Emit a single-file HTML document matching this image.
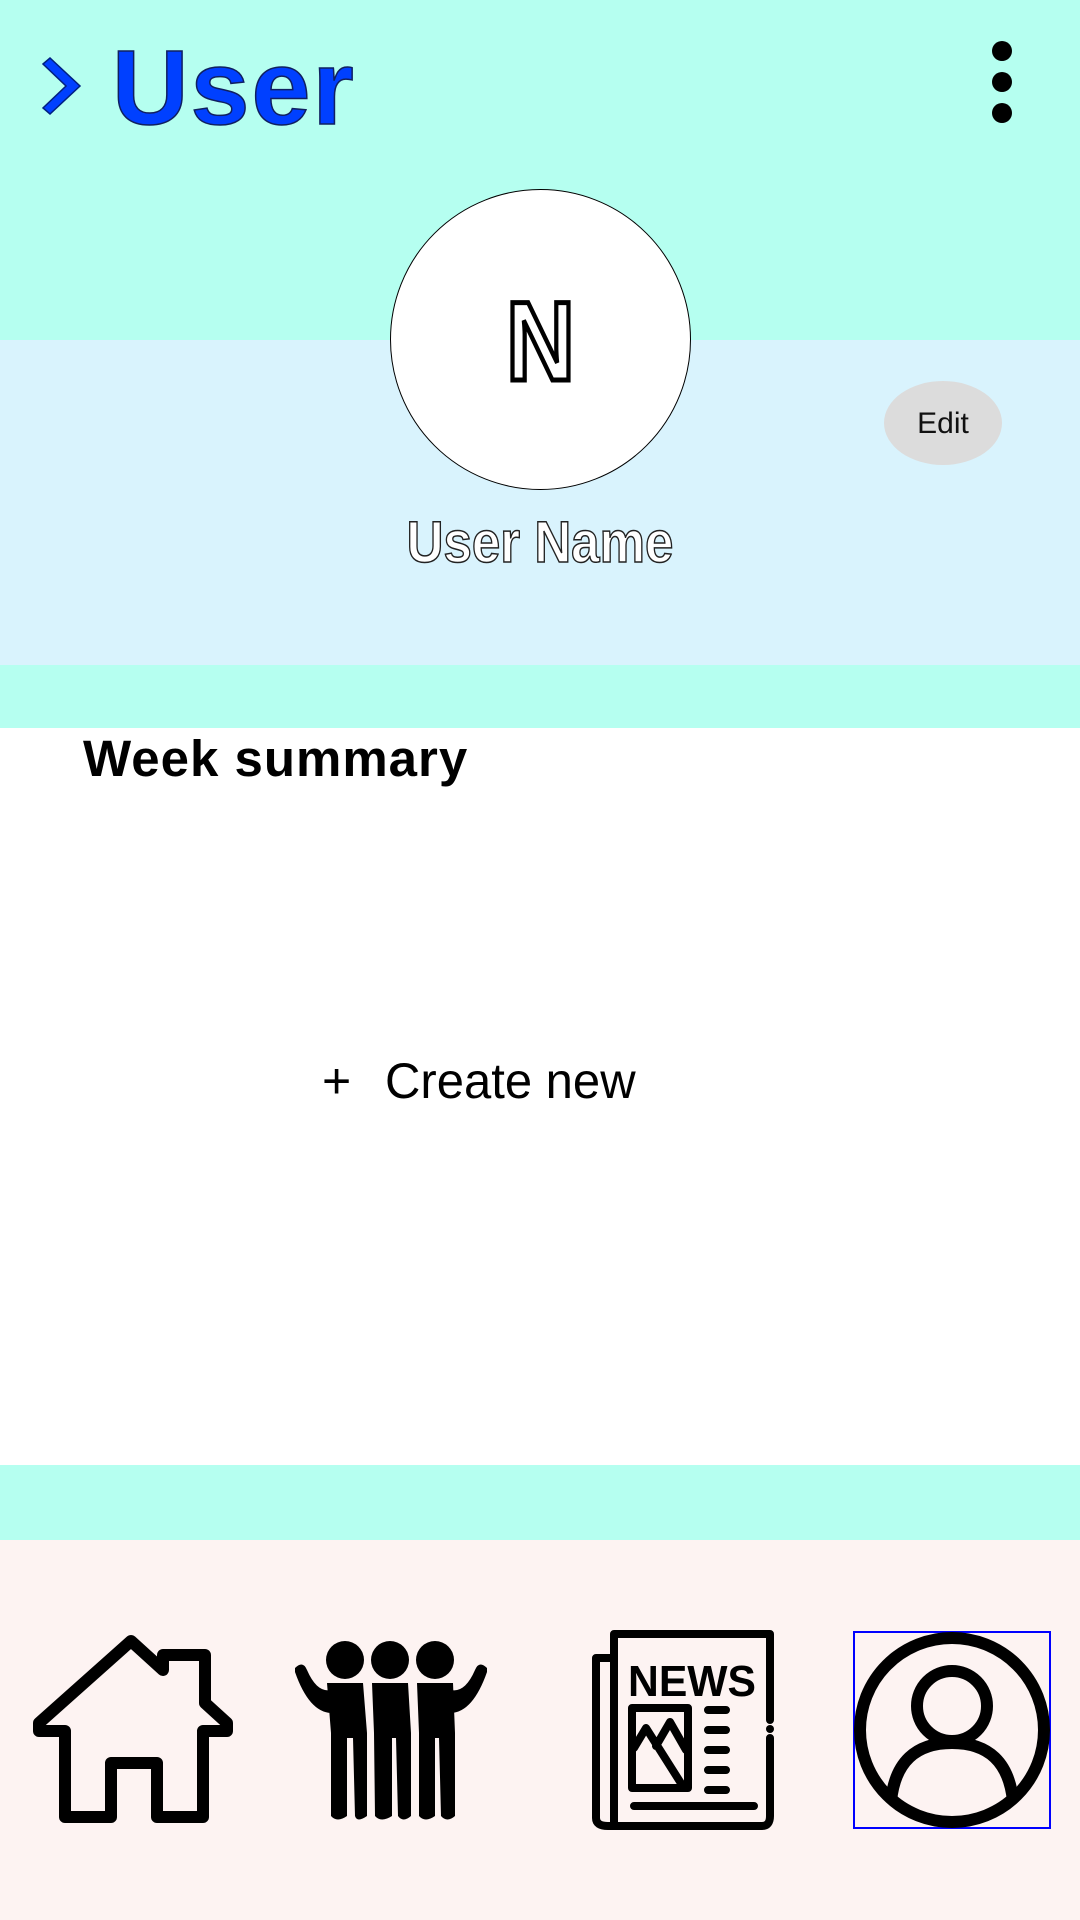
<!DOCTYPE html>
<html><head><meta charset="utf-8"><style>
*{margin:0;padding:0;box-sizing:border-box}
body{width:1080px;height:1920px;position:relative;overflow:hidden;font-family:"Liberation Sans",sans-serif;background:#fff}
.b{position:absolute;left:0;width:1080px}
.t{position:absolute;white-space:nowrap}
</style></head><body>
<div class="b" style="top:0;height:340px;background:#b5fff0"></div>
<div class="b" style="top:340px;height:325px;background:#d9f3fd"></div>
<div class="b" style="top:665px;height:63px;background:#b5fff0"></div>
<div class="b" style="top:728px;height:737px;background:#fff"></div>
<div class="b" style="top:1465px;height:75px;background:#b5fff0"></div>
<div class="b" style="top:1540px;height:380px;background:#fdf3f2"></div>

<svg style="position:absolute;left:40px;top:56px" width="44" height="60" viewBox="0 0 44 60"><path d="M3 8 L10 2 L40 30 L10 58 L3 52 L26 30 Z" fill="#0040ff" stroke="#002080" stroke-width="1.5"/></svg>
<div class="t" style="left:112px;top:28px;font-size:106px;font-weight:bold;color:#0040ff;-webkit-text-stroke:1.5px #102060;letter-spacing:2px;line-height:120px">User</div>

<div style="position:absolute;left:992px;top:41px;width:20px;height:20px;border-radius:50%;background:#000"></div>
<div style="position:absolute;left:992px;top:72px;width:20px;height:20px;border-radius:50%;background:#000"></div>
<div style="position:absolute;left:992px;top:103px;width:20px;height:20px;border-radius:50%;background:#000"></div>

<div style="position:absolute;left:390px;top:189px;width:301px;height:301px;border-radius:50%;background:#fff;border:1px solid #000"></div>
<div class="t" style="left:390px;width:301px;text-align:center;top:282px;font-size:112px;font-weight:bold;color:#fff;-webkit-text-stroke:5px #000;line-height:120px;transform:scaleX(0.85)">N</div>

<div style="position:absolute;left:884px;top:381px;width:118px;height:84px;border-radius:50%;background:#dcdcdc"></div>
<div class="t" style="left:884px;width:118px;text-align:center;top:406px;font-size:30px;color:#111;line-height:36px">Edit</div>

<div class="t" style="left:340px;width:400px;text-align:center;top:508px;font-size:58px;font-weight:bold;color:#fff;-webkit-text-stroke:1.5px #222;line-height:70px;transform:scaleX(0.88);transform-origin:200px 0">User Name</div>

<div class="t" style="left:83px;top:728px;font-size:51px;font-weight:bold;color:#000;line-height:62px;letter-spacing:1px">Week summary</div>

<div class="t" style="left:322px;top:1050px;font-size:50px;color:#000;line-height:62px">+</div>
<div class="t" style="left:385px;top:1050px;font-size:50px;color:#000;line-height:62px;transform:scaleX(0.98);transform-origin:0 0">Create new</div>

<!-- home -->
<svg style="position:absolute;left:33px;top:1635px" width="200" height="190" viewBox="0 0 200 190">
<path d="M98 6 L130 35 L130 20 L172 20 L172 68 L194 88 L194 96 L170 96 L170 182 L124 182 L124 128 L78 128 L78 182 L32 182 L32 96 L6 96 L6 88 Z" fill="none" stroke="#000" stroke-width="12" stroke-linejoin="round"/>
</svg>
<!-- people -->
<svg style="position:absolute;left:291px;top:1638px" width="200" height="185" viewBox="0 0 200 185">
<g fill="#000">
<circle cx="54" cy="22" r="19"/><circle cx="99" cy="22" r="19"/><circle cx="144" cy="22" r="19"/>
<path d="M36 45 L72 45 L76 95 L76 178 Q66 185 64 178 L62 100 L56 100 L56 178 Q46 185 40 178 L40 95 Z"/>
<path d="M81 45 L117 45 L120 95 L120 178 Q112 185 107 178 L105 100 L101 100 L101 178 Q90 185 84 178 L83 95 Z"/>
<path d="M126 45 L162 45 L164 95 L164 178 Q156 185 150 178 L148 100 L144 100 L144 178 Q134 185 128 178 L128 95 Z"/>
<path d="M4 30 Q12 22 16 32 Q26 55 40 52 L40 75 Q18 74 4 34 Z"/>
<path d="M196 30 Q188 22 184 32 Q174 55 160 52 L160 75 Q182 74 196 34 Z"/>
</g></svg>
<!-- news -->
<svg style="position:absolute;left:590px;top:1630px" width="186" height="200" viewBox="0 0 186 200">
<g fill="none" stroke="#000" stroke-width="8" stroke-linecap="round" stroke-linejoin="round">
<path d="M24 28 L6 28 L6 188 Q6 196 18 196 L172 196 Q180 196 180 186 L180 108"/>
<path d="M180 90 L180 4 L24 4 L24 196"/>
<rect x="42" y="78" width="56" height="80"/>
<path d="M44 118 L56 98 L94 158 M66 116 L80 92 L96 120"/>
<path d="M118 80 L136 80 M118 100 L136 100 M118 120 L136 120 M118 140 L136 140 M118 160 L136 160 M44 176 L164 176"/>
</g>
<circle cx="180" cy="99" r="4" fill="#000"/>
<text x="38" y="66" font-family="Liberation Sans" font-weight="bold" font-size="44" fill="#000" textLength="128" lengthAdjust="spacingAndGlyphs">NEWS</text>
</svg>
<!-- user -->
<div style="position:absolute;left:853px;top:1631px;width:198px;height:198px;border:2px solid #00f"></div>
<svg style="position:absolute;left:853px;top:1631px" width="198" height="198" viewBox="0 0 198 198">
<g fill="none" stroke="#000" stroke-width="12">
<circle cx="99" cy="99" r="92"/>
<circle cx="99" cy="75" r="35"/>
<path d="M38 170 Q44 112 99 112 Q154 112 160 170"/>
</g></svg>
</body></html>
